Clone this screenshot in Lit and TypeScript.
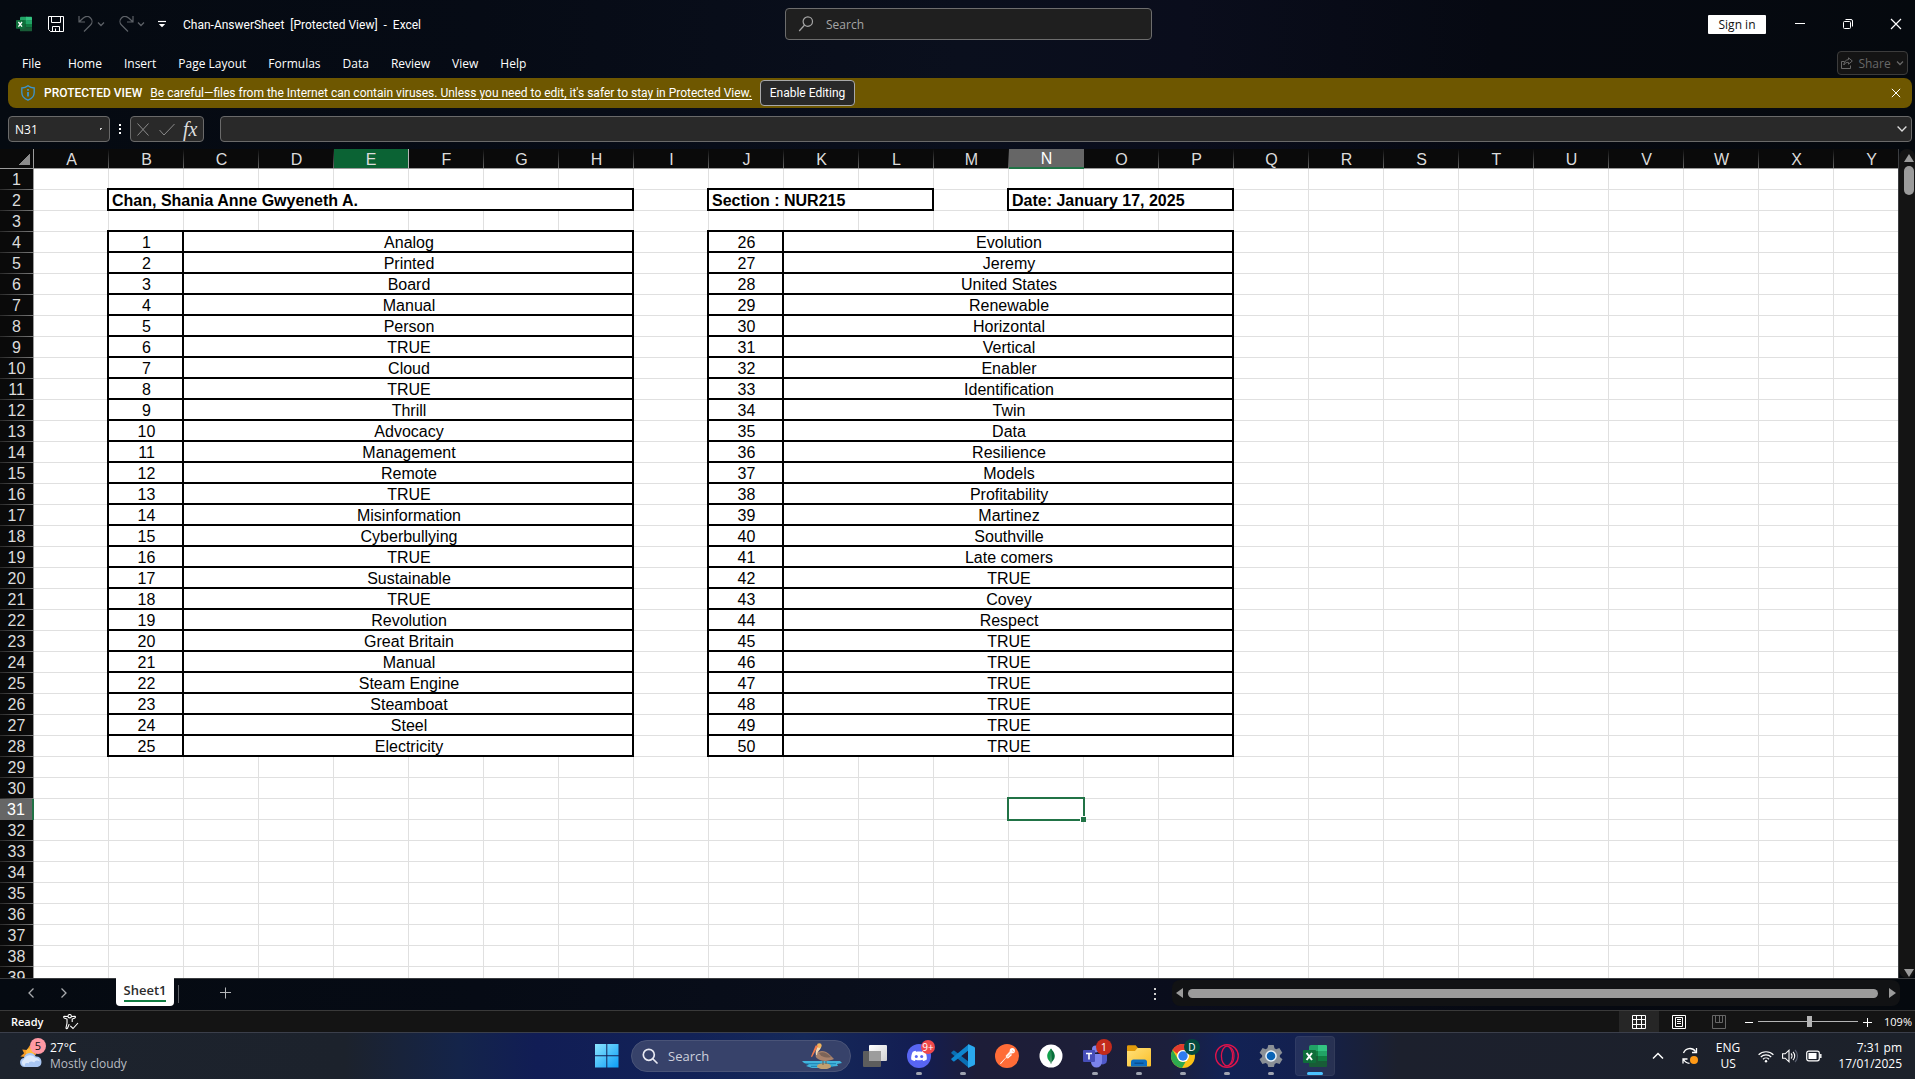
import { LitElement, html, css, nothing } from "lit";
import { customElement, state } from "lit/decorators.js";
import { classMap } from "lit/directives/class-map.js";

const ICONS = {
  excel: html`<svg viewBox="0 0 24 24" aria-hidden="true">
    <path fill="#21a366" d="M8 1h8v6H6V3a2 2 0 0 1 2-2z" />
    <path fill="#33c481" d="M15 1h8a1 1 0 0 1 1 1v5h-9z" />
    <path fill="#107c41" d="M6 7h9v5H6z" />
    <path fill="#21a366" d="M15 7h9v5h-9z" />
    <path fill="#185c37" d="M6 12h9v5h9v5a1 1 0 0 1-1 1H7a1 1 0 0 1-1-1z" />
    <path fill="#107c41" d="M15 12h9v5h-9z" />
    <rect x="0" y="6" width="13" height="13" rx="1" fill="#0f6e3a" />
    <path d="M3.600 9l5.400 7M9 9l-5.400 7" stroke="#fff" stroke-width="2" fill="none" />
  </svg>`,
  save: html`<svg viewBox="0 0 16 16" fill="none" stroke="#fff" stroke-width="1" aria-hidden="true">
    <path d="M.5.5h15v15h-13l-2-2zM3.500.5v6h9v-6M4.500 15.500v-5h7v5M7.500 12.500v3" />
  </svg>`,
  undo: html`<svg viewBox="0 0 16 16" fill="none" stroke="#5d6167" stroke-width="1.200" aria-hidden="true">
    <path d="M1 0v6h6M1.200 5.800L5 2.200C7.500 0 10.500 0 12.500 2c2 2 2 5 0 7L6 15.500" />
  </svg>`,
  redo: html`<svg viewBox="0 0 16 16" fill="none" stroke="#5d6167" stroke-width="1.200" aria-hidden="true">
    <path d="M15 0v6H9M14.800 5.800L11 2.200C8.500 0 5.500 0 3.500 2c-2 2-2 5 0 7l6.500 6.500" />
  </svg>`,
  chev: html`<svg viewBox="0 0 8 8" fill="none" stroke="currentColor" stroke-width="1.300" aria-hidden="true">
    <path d="M1 2.500l3 3 3-3" />
  </svg>`,
  customise: html`<svg viewBox="0 0 8 8" aria-hidden="true">
    <path d="M0 1.500h8" stroke="#fff" stroke-width="1.200" /><path d="M.8 4h6.400L4 7.200z" fill="#fff" />
  </svg>`,
  lens: html`<svg viewBox="0 0 16 16" fill="none" stroke="#a5a5a5" stroke-width="1.200" aria-hidden="true">
    <circle cx="9.800" cy="5.600" r="4.700" /><path d="M6.600 9L1.200 15" />
  </svg>`,
  minus: html`<svg viewBox="0 0 12 12" aria-hidden="true"><path d="M1 5.500h10" stroke="#fff" stroke-width="1" /></svg>`,
  restore: html`<svg viewBox="0 0 12 12" fill="none" stroke="#fff" stroke-width="1" aria-hidden="true">
    <rect x="1.500" y="3.500" width="7" height="7" rx="1" /><path d="M3.500 1.500H9a1.500 1.500 0 0 1 1.500 1.500v5.500" />
  </svg>`,
  close: html`<svg viewBox="0 0 12 12" aria-hidden="true"><path d="M1 1l10 10M11 1L1 11" stroke="#fff" stroke-width="1.200" /></svg>`,
  share: html`<svg viewBox="0 0 12 12" fill="none" stroke="#686868" stroke-width="1" aria-hidden="true">
    <path d="M3.500 4.500h-3v7h9v-3M7.500.8L11.300 4 7.500 7.200V5.400C5.500 5.200 4 6 2.800 8 3 5 4.800 2.700 7.500 2.600z" />
  </svg>`,
  shield: html`<svg viewBox="0 0 14 16" aria-hidden="true">
    <path d="M7 .8C5.300 2.200 3 3 .8 3v4.500c0 4 2.500 6.300 6.200 7.700 3.700-1.400 6.200-3.700 6.200-7.700V3C11 3 8.700 2.200 7 .8z" fill="none" stroke="#3c95d0" stroke-width="1.300" />
    <path d="M7 4v1.800M7 7v4.500" stroke="#3c95d0" stroke-width="1.800" />
  </svg>`,
  cancel: html`<svg viewBox="0 0 16 16" fill="none" stroke="#8b8b8b" stroke-width="1" aria-hidden="true"><path d="M2.500 2.500l11 12M13.500 2.500l-11 12" /></svg>`,
  tick: html`<svg viewBox="0 0 16 16" fill="none" stroke="#8b8b8b" stroke-width="1" aria-hidden="true"><path d="M.5 9l4.500 5L15.500 3" /></svg>`,
  downWide: html`<svg viewBox="0 0 10 8" fill="none" stroke="#ddd" stroke-width="1.300" aria-hidden="true"><path d="M.6 1.500L5 6l4.400-4.500" /></svg>`,
  left: html`<svg viewBox="0 0 8 12" fill="none" stroke="#a9abae" stroke-width="1.300" aria-hidden="true"><path d="M6.500 1.500L2 6l4.500 4.500" /></svg>`,
  right: html`<svg viewBox="0 0 8 12" fill="none" stroke="#a9abae" stroke-width="1.300" aria-hidden="true"><path d="M1.500 1.500L6 6l-4.500 4.500" /></svg>`,
  plus: html`<svg viewBox="0 0 12 12" aria-hidden="true"><path d="M5.500 .5v11M0 5.500h11" stroke="#b5b7ba" stroke-width="1" /></svg>`,
  access: html`<svg viewBox="0 0 16 16" fill="none" stroke="#fff" stroke-width="1.100" aria-hidden="true">
    <path d="M5 2.500L1.200 2.200C.4 2.500.5 3.600 1.200 3.900L4 5v4l-1 5c.3.800 1.200.8 1.500.2L6 10.500h.5M8.500 2.500l3.400-.3c.8.300.8 1.400 0 1.700L9.200 5v3" />
    <circle cx="6.700" cy="2.200" r="1.700" /><path d="M7.300 11.800l2.700 2.700 5-5.500" />
  </svg>`,
  viewGrid: html`<svg viewBox="0 0 14 14" fill="none" stroke="#fff" stroke-width="1" aria-hidden="true"><path d="M.5.5h13v13H.5zM4.500 .5v13M9.500 .5v13M.5 4.500h13M.5 9.500h13" /></svg>`,
  viewPage: html`<svg viewBox="0 0 14 14" fill="none" stroke="#fff" stroke-width="1" aria-hidden="true"><path d="M.5.5h13v13H.5zM3.500 2.500h7v9h-7zM5 4.500h4M5 6.500h4M5 8.500h4" /></svg>`,
  viewBreak: html`<svg viewBox="0 0 14 14" fill="none" stroke="#666" stroke-width="1" aria-hidden="true"><path d="M.5.5h13v13H.5zM3.500.5v7h7v-7M7.500 .5v7" /></svg>`,
  zoomOut: html`<svg viewBox="0 0 10 10" aria-hidden="true"><path d="M1 5.500h8" stroke="#fff" stroke-width="1" /></svg>`,
  zoomIn: html`<svg viewBox="0 0 10 10" aria-hidden="true"><path d="M1 5.500h9M5.500 1v9" stroke="#fff" stroke-width="1" /></svg>`,
  weather: html`<svg viewBox="0 0 26 26" aria-hidden="true">
    <path d="M12 1l2.500 5 5-1-1 6-6 6-5-3-6-.500 4-3.500-2-4 5 .500z" fill="#f59a23" />
    <circle cx="12" cy="9" r="4.500" fill="#ffb83d" />
    <path d="M6 25a5 5 0 0 1-.8-9.900 7 7 0 0 1 13-1.500A5.800 5.800 0 0 1 20 25z" fill="#a9c6f2" />
    <path d="M6 24a4 4 0 0 1-.5-7.500 7 7 0 0 1 12-1.500c3 0 5 2 5 4-3-2-5-1-6 1-3-2-6-1-6 1-2-1-3-.5-4 .5z" fill="#dce9fc" />
  </svg>`,
  start: html`<svg viewBox="0 0 24 24" aria-hidden="true">
    <defs><linearGradient id="win" x1="0" y1="0" x2="1" y2="1"><stop offset="0" stop-color="#8be4fd" /><stop offset="1" stop-color="#0a9df7" /></linearGradient></defs>
    <path fill="url(#win)" d="M0 0h11.300v11.300H0zM12.300 0H23.500v11.300H12.300zM0 12.300h11.300v11.300H0zM12.300 12.300h11.200v11.300H12.300z" />
  </svg>`,
  taskLens: html`<svg viewBox="0 0 16 16" fill="none" stroke="#e8e9f2" stroke-width="1.700" aria-hidden="true"><circle cx="6.800" cy="6.800" r="5.500" /><path d="M11 11l4 4" stroke-linecap="round" /></svg>`,
  pelican: html`<svg viewBox="0 0 40 26" aria-hidden="true">
    <path d="M0 18h38l2 2-5 1 1 2-6 .5-3 1.500H10l-6-2 3-1.500-5-1.500z" fill="#42b4dc" />
    <path d="M4 20h30v1.200H4zM9 22.800h22V24H9z" fill="#2389b8" />
    <ellipse cx="22" cy="23.200" rx="7" ry="3" fill="#c2a170" />
    <path d="M21 15v7M24 15v6" stroke="#6b5f55" stroke-width="1" />
    <path d="M14 11c4-5 10-3 14 1l4 4c-4 2-12 3-16 0-2-1-3-3-2-5z" fill="#a8826c" />
    <path d="M17 10c4-2 8 0 12 4-4 1-9 1-12-4z" fill="#7c6458" />
    <path d="M15 12c0-4 4-5 4-8.500A2.200 2.200 0 0 0 15 3c0 3-2 5-1 9z" fill="#f3d9b4" />
    <circle cx="17.300" cy="2.700" r="2.400" fill="#f0b45c" />
    <path d="M16.500 2.500L10 14c-.8.500-1-.5-.6-1.500l4.200-10z" fill="#f07a4c" />
  </svg>`,
  taskview: html`<svg viewBox="0 0 24 24" aria-hidden="true">
    <defs><linearGradient id="tvw" x1="0" y1="0" x2="1" y2="1"><stop offset="0" stop-color="#fff" /><stop offset="1" stop-color="#d2d2d2" /></linearGradient></defs>
    <rect x="6" y="1" width="18" height="16" rx="1" fill="url(#tvw)" />
    <rect x="0" y="7" width="18" height="16" rx="1" fill="#5d5d5d" />
    <path d="M6 7h12v10H6z" fill="#9d9d9d" />
  </svg>`,
  discord: html`<svg viewBox="0 0 24 24" aria-hidden="true">
    <circle cx="12" cy="12" r="12" fill="#5865f2" />
    <path fill="#fff" d="M8.500 6.800c-1 .2-2 .5-2.700.9C4.500 10 4 12.500 4.200 15.500c1.200.9 2.300 1.300 3.600 1.600l.8-1.400c2.200.8 4.600.8 6.800 0l.8 1.400c1.300-.3 2.400-.7 3.600-1.600.2-3-.3-5.500-1.600-7.800-.8-.4-1.700-.7-2.700-.9l-.6 1c-2-.3-3.800-.3-5.800 0z" />
    <circle cx="9.300" cy="12.400" r="1.500" fill="#5865f2" /><circle cx="14.700" cy="12.400" r="1.500" fill="#5865f2" />
  </svg>`,
  vscode: html`<svg viewBox="0 0 24 24" aria-hidden="true">
    <path fill="#0a6fb3" d="M.5 8.200l1.700-1.500a1 1 0 0 1 1.300 0L18 18v6L.5 9.500a1 1 0 0 1 0-1.300z" />
    <path fill="#0e86cf" d="M.5 15.800l1.700 1.500a1 1 0 0 0 1.300 0L18 6V0L.5 14.500a1 1 0 0 0 0 1.300z" />
    <path fill="#2aa9ee" d="M17.500 23.800c-.6-.5-.5-1-.5-1.500V1.700c0-.5 0-1 .6-1.500L23 2.700c.6.300 1 .8 1 1.500v15.600c0 .7-.4 1.200-1 1.500z" />
  </svg>`,
  postman: html`<svg viewBox="0 0 24 24" aria-hidden="true">
    <circle cx="12" cy="12" r="12" fill="#ff6c37" />
    <path d="M5 19.500l6.500-6.700 3.500-3.600 2 1.800-4 3.500-2-.5-5.200 6z" fill="#fff" />
    <path d="M10.500 12l4.500-5 2.300 2.500-5 4.500z" fill="#fff" opacity=".9" />
    <circle cx="17.300" cy="6.700" r="2.600" fill="#fff" />
    <path d="M12 13.500l4.500-4.500" stroke="#ff6c37" stroke-width=".7" /><path d="M17.300 6.700l1.300 1" stroke="#ff6c37" stroke-width=".8" />
  </svg>`,
  mongo: html`<svg viewBox="0 0 24 24" aria-hidden="true">
    <circle cx="12" cy="12" r="11.500" fill="#fff" />
    <path d="M12 4.300c-.6 1.700-3.800 4-3.800 7.800 0 3.200 2 5 3.300 6.100z" fill="#10a04b" />
    <path d="M12 4.300c.6 1.700 3.800 4 3.800 7.800 0 3.200-2 5-3.300 6.100z" fill="#07703a" />
    <path d="M12 5v14.500" stroke="#0b6b39" stroke-width="1" />
  </svg>`,
  teams: html`<svg viewBox="0 0 24 24" aria-hidden="true">
    <circle cx="19.500" cy="8" r="2.500" fill="#5059c9" /><path d="M17 10.500h7v6a4 4 0 0 1-7 2.500z" fill="#5059c9" />
    <circle cx="12.500" cy="5" r="3.500" fill="#7b83eb" /><path d="M8 10h11v8a5.500 5.500 0 0 1-11 0z" fill="#7b83eb" />
    <rect y="6" width="12" height="12" rx="1" fill="#464eb8" />
    <path d="M3 9.500h6M6 9.500v6" stroke="#fff" stroke-width="1.600" />
  </svg>`,
  folder: html`<svg viewBox="0 0 24 24" aria-hidden="true">
    <defs><linearGradient id="fld" x1="0" y1="0" x2="1" y2="1"><stop offset="0" stop-color="#ffe07a" /><stop offset="1" stop-color="#fbc02a" /></linearGradient></defs>
    <path d="M0 2.500A1.200 1.200 0 0 1 1.200 1.300h7.500L11 4v4H0z" fill="#e19a0a" />
    <path d="M0 7h8l2.500-3H23a1 1 0 0 1 1 1v16.500a1 1 0 0 1-1 1H1a1 1 0 0 1-1-1z" fill="url(#fld)" />
    <path d="M4 22.500V18a2.500 2.500 0 0 1 2.500-2.500h11A2.500 2.500 0 0 1 20 18v4.500z" fill="#0f6fc0" />
    <path d="M7.500 18.500h9v1.500h-9z" fill="#0a4f92" />
  </svg>`,
  chrome: html`<svg viewBox="0 0 24 24" aria-hidden="true">
    <circle cx="12" cy="12" r="12" fill="#fbc116" />
    <path d="M12 0a12 12 0 0 1 10.400 6H12a6 6 0 0 0-5.500 4L1.600 6A12 12 0 0 1 12 0z" fill="#e33b2e" />
    <path d="M1.600 6l5.200 9A6 6 0 0 0 12 18h2.500L11 24A12 12 0 0 1 1.600 6z" fill="#2da94f" />
    <circle cx="12" cy="12" r="6" fill="#fff" /><circle cx="12" cy="12" r="4.700" fill="#2f7cf0" />
  </svg>`,
  opera: html`<svg viewBox="0 0 24 24" fill="none" stroke="#e0134b" aria-hidden="true">
    <circle cx="12" cy="12" r="11.300" stroke-width="1.400" /><ellipse cx="12" cy="12" rx="5.600" ry="9.800" stroke-width="1.300" />
    <path d="M14.500 2.800c6 3 6 15.400 0 18.400" stroke-width="1.200" />
  </svg>`,
  settings: html`<svg viewBox="0 0 24 24" aria-hidden="true">
    <path fill="#8b9096" d="M9.300 1h5.400l.8 3.200 1.700 1L20.300 4l3 4.800-2.500 2.400v1.800l2.700 2.200-2.900 4.800-3.200-1.100-1.700 1-.8 3.100H9.300l-.9-3.100-1.700-1L3.400 20 .5 15.200 3.100 13v-1.800L.6 8.800l3-4.800 3.100 1.200 1.700-1z" />
    <circle cx="12" cy="12" r="5.800" fill="#e9f3fb" /><circle cx="12" cy="12" r="4.300" fill="#0a63b5" />
  </svg>`,
  up: html`<svg viewBox="0 0 12 12" fill="none" stroke="#fff" stroke-width="1.500" aria-hidden="true"><path d="M1 8.500l5-5 5 5" /></svg>`,
  sync: html`<svg viewBox="0 0 16 18" fill="none" stroke="#fff" stroke-width="1.300" aria-hidden="true">
    <path d="M1.500 6a6.800 6.800 0 0 1 12-1.500M14.500 1v4.500H10M1 16.500V12h4.500M1.500 12.500c1.500 2.500 3.500 3.700 6 3.800" />
    <circle cx="12" cy="13" r="4" fill="#ff9a17" stroke="none" />
  </svg>`,
  wifi: html`<svg viewBox="0 0 16 14" fill="none" stroke="#fff" stroke-width="1.200" aria-hidden="true">
    <path d="M.6 5.800a10.500 10.500 0 0 1 14.800 0M2.800 8a7.400 7.400 0 0 1 10.400 0M5 10.200a4.300 4.300 0 0 1 6 0" /><circle cx="8" cy="12.200" r="1.200" fill="#fff" stroke="none" />
  </svg>`,
  volume: html`<svg viewBox="0 0 16 14" fill="none" stroke="#fff" stroke-width="1.100" aria-hidden="true">
    <path d="M.6 4.800h2.600L7 1.200v11.600L3.200 9.200H.6zM9 4.500a3.500 3.500 0 0 1 0 5M11 2.800a6 6 0 0 1 0 8.400" /><path d="M13 1a8.500 8.500 0 0 1 0 12" stroke="#5a6070" />
  </svg>`,
  battery: html`<svg viewBox="0 0 16 12" aria-hidden="true">
    <rect x=".7" y="1.200" width="12.600" height="9.600" rx="2" fill="none" stroke="#fff" stroke-width="1.200" /><rect x="2.500" y="3" width="8" height="6" fill="#fff" /><path d="M14.800 4v4" stroke="#fff" stroke-width="1.400" />
  </svg>`,
};

const COLUMNS = "ABCDEFGHIJKLMNOPQRSTUVWXY".split("");
const ROW_COUNT = 39;

const LEFT_ANSWERS = [
  "Analog", "Printed", "Board", "Manual", "Person", "TRUE", "Cloud", "TRUE", "Thrill", "Advocacy",
  "Management", "Remote", "TRUE", "Misinformation", "Cyberbullying", "TRUE", "Sustainable", "TRUE",
  "Revolution", "Great Britain", "Manual", "Steam Engine", "Steamboat", "Steel", "Electricity",
];
const RIGHT_ANSWERS = [
  "Evolution", "Jeremy", "United States", "Renewable", "Horizontal", "Vertical", "Enabler",
  "Identification", "Twin", "Data", "Resilience", "Models", "Profitability", "Martinez", "Southville",
  "Late comers", "TRUE", "Covey", "Respect", "TRUE", "TRUE", "TRUE", "TRUE", "TRUE", "TRUE",
];

interface Block {
  row: number;
  col: number;
  span: number;
  text: string;
  bold?: boolean;
}

/* Bordered blocks of the sheet; col counts from 0 (A). */
const BLOCKS: Block[] = [
  { row: 2, col: 1, span: 7, text: "Chan, Shania Anne Gwyeneth A.", bold: true },
  { row: 2, col: 9, span: 3, text: "Section : NUR215", bold: true },
  { row: 2, col: 13, span: 3, text: "Date: January 17, 2025", bold: true },
  ...LEFT_ANSWERS.flatMap((text, i) => [
    { row: i + 4, col: 1, span: 1, text: String(i + 1) },
    { row: i + 4, col: 2, span: 6, text },
  ]),
  ...RIGHT_ANSWERS.flatMap((text, i) => [
    { row: i + 4, col: 9, span: 1, text: String(i + 26) },
    { row: i + 4, col: 10, span: 6, text },
  ]),
];

const blockAt = (row: number, col: number) =>
  BLOCKS.find((b) => b.row === row && col >= b.col && col < b.col + b.span);

const SHARED = css`
  :host {
    display: block;
    font-family: "Open Sans", "Noto Sans", sans-serif;
    font-size: 12px;
    color: #fff;
  }
  * { box-sizing: border-box; }
  button, input {
    font: inherit;
    color: inherit;
    margin: 0;
    padding: 0;
    border: 0;
    background: none;
  }
  button {
    display: flex;
    align-items: center;
    justify-content: center;
    flex: none;
  }
  svg { display: block; flex: none; }
  .s8 svg { width: 8px; height: 8px; }
  .s10 svg { width: 10px; height: 10px; }
  .s12 svg { width: 12px; height: 12px; }
  .s14 svg { width: 14px; height: 14px; }
  .s16 svg { width: 16px; height: 16px; }
  .s24 svg { width: 24px; height: 24px; }
`;

@customElement("title-bar")
class TitleBar extends LitElement {
  static styles = [SHARED, css`
    .bar {
      display: grid;
      grid-template-columns: minmax(0, 1fr) 367px minmax(0, 1fr);
      height: 46px;
      padding: 2px 0 0 22px;
      align-items: center;
    }
    .quick { display: flex; align-items: center; margin-left: -6px; }
    .app { width: 32px; }
    .save { width: 16px; margin-right: 14px; }
    .split { width: 14px; color: #5d6167; margin-right: 10px; }
    .title { margin-left: 17px; padding-top: 1px; white-space: pre; font-family: Roboto, sans-serif; }
    .search {
      display: flex;
      align-items: center;
      gap: 12px;
      height: 32px;
      padding: 0 12px;
      border: 1px solid #6d6d6d;
      border-radius: 4px;
      background: #1f1f1f;
    }
    .search input { flex: 1; min-width: 0; }
    .search input::placeholder { color: #a5a5a5; opacity: 1; }
    .window { display: flex; justify-content: flex-end; align-items: center; gap: 10px; }
    .signin {
      width: 58px;
      height: 19px;
      background: #fff;
      color: #111;
      border-radius: 1px;
      margin-right: 5px;
    }
    .ctl { width: 38px; height: 32px; }
  `];

  render() {
    return html`
      <header class="bar">
        <div class="quick">
          <span class="app s16">${ICONS.excel}</span>
          <button class="save s16" aria-label="Save">${ICONS.save}</button>
          <button class="s16" aria-label="Undo">${ICONS.undo}</button>
          <button class="split s8" aria-label="Undo history">${ICONS.chev}</button>
          <button class="s16" aria-label="Redo">${ICONS.redo}</button>
          <button class="split s8" aria-label="Redo history">${ICONS.chev}</button>
          <button class="s8" aria-label="Customise Quick Access Toolbar">${ICONS.customise}</button>
          <span class="title">Chan-AnswerSheet  [Protected View]  -  Excel</span>
        </div>
        <label class="search s16">${ICONS.lens}<input type="search" placeholder="Search" aria-label="Search" /></label>
        <div class="window s12">
          <button class="signin">Sign in</button>
          <button class="ctl" aria-label="Minimise">${ICONS.minus}</button>
          <button class="ctl" aria-label="Restore">${ICONS.restore}</button>
          <button class="ctl" aria-label="Close">${ICONS.close}</button>
        </div>
      </header>`;
  }
}

@customElement("ribbon-tabs")
class RibbonTabs extends LitElement {
  static styles = [SHARED, css`
    .tabs { display: flex; align-items: center; height: 32px; padding: 2px 7px 0 11px; }
    .tab { padding: 0 11px; height: 24px; }
    .tab:first-child { margin-right: 5px; }
    .share {
      display: flex;
      gap: 5px;
      width: 71px;
      height: 24px;
      margin-left: auto;
      border: 1px solid #3c3c3c;
      border-radius: 4px;
      background: #141414;
      color: #686868;
    }
  `];

  render() {
    const tabs = ["File", "Home", "Insert", "Page Layout", "Formulas", "Data", "Review", "View", "Help"];
    return html`
      <nav class="tabs">
        ${tabs.map((t) => html`<button class="tab">${t}</button>`)}
        <button class="share" disabled>
          <span class="s12">${ICONS.share}</span>Share<span class="s8">${ICONS.chev}</span>
        </button>
      </nav>`;
  }
}

@customElement("message-bar")
class MessageBar extends LitElement {
  static styles = [SHARED, css`
    .bar {
      display: flex;
      align-items: center;
      height: 30px;
      margin: 0 3px 0 8px;
      padding: 0 11px 0 12px;
      border-radius: 8px;
      background: #6e5700;
      font-family: Roboto, sans-serif;
    }
    .shield svg { width: 16px; height: 16px; }
    .name { margin-left: 8px; font-weight: 500; }
    .link { margin-left: 8px; color: #fff; text-decoration: underline; text-underline-offset: 2px; }
    .enable {
      height: 26px;
      width: 95px;
      margin-left: 8px;
      border: 1px solid #a8a8a8;
      border-radius: 4px;
      background: #292929;
    }
    .dismiss { margin-left: auto; }
  `];

  render() {
    return html`
      <section class="bar" aria-label="Protected View">
        <span class="shield">${ICONS.shield}</span>
        <span class="name">PROTECTED VIEW</span>
        <a class="link" href="#protected-view">Be careful—files from the Internet can contain viruses. Unless you need to edit, it's safer to stay in Protected View.</a>
        <button class="enable">Enable Editing</button>
        <button class="dismiss s10" aria-label="Dismiss">${ICONS.close}</button>
      </section>`;
  }
}

@customElement("formula-bar")
class FormulaBar extends LitElement {
  static styles = [SHARED, css`
    .bar { display: flex; align-items: center; height: 41px; padding: 1px 3px 0 8px; }
    .box {
      display: flex;
      align-items: center;
      height: 26px;
      border: 1px solid #6a6a6a;
      border-radius: 4px;
      background: #292929;
    }
    .name { width: 102px; padding: 0 6px; }
    .name input { flex: 1; min-width: 0; }
    .mark { width: 3px; height: 3px; background: linear-gradient(135deg, #ccc 50%, transparent 50%); }
    .dots { width: 20px; display: grid; gap: 2px; justify-content: center; }
    .dots i { width: 2px; height: 2px; background: #fff; }
    .tools { width: 74px; padding: 0 4px; gap: 8px; margin-right: 16px; }
    .fx { font: italic 20px/20px "Liberation Serif", serif; color: #ddd; }
    .formula { flex: 1; min-width: 0; padding: 0 4px 0 8px; }
    .formula input { flex: 1; min-width: 0; }
    .formula svg { width: 10px; height: 8px; }
  `];

  render() {
    return html`
      <div class="bar">
        <div class="box name">
          <input type="text" value="N31" aria-label="Name box" />
          <button aria-label="Named ranges"><span class="mark"></span></button>
        </div>
        <span class="dots"><i></i><i></i><i></i></span>
        <div class="box tools s16">
          <button aria-label="Cancel">${ICONS.cancel}</button>
          <button aria-label="Enter">${ICONS.tick}</button>
          <button class="fx" aria-label="Insert function">fx</button>
        </div>
        <div class="box formula">
          <input type="text" aria-label="Formula bar" />
          <button aria-label="Expand formula bar">${ICONS.downWide}</button>
        </div>
      </div>`;
  }
}

@customElement("sheet-grid")
class SheetGrid extends LitElement {
  @state() private selected = { row: 31, col: 13 };

  static styles = [SHARED, css`
    :host { flex: 1; min-height: 0; }
    .area { display: flex; height: 100%; border-bottom: 1px solid #3b3d40; }
    .view { flex: 1; min-width: 0; overflow: hidden; background: #fff; border-right: 1px solid #3b3d40; }
    table {
      width: 1909px;
      table-layout: fixed;
      border-collapse: separate;
      border-spacing: 0;
      font: 16px/17px "Liberation Sans", Arial, sans-serif;
      color: #000;
    }
    .heads { width: 34px; }
    th, td { padding: 2px 0 0; overflow: hidden; white-space: nowrap; height: 21px; vertical-align: top; }
    th {
      font-weight: 400;
      color: #dcdcdc;
      background: #0a0a0a;
      border: 0 solid #9b9b9b;
    }
    thead th {
      height: 20px;
      border-bottom-width: 1px;
      background: linear-gradient(#0a0a0a, #686868) right / 1px 100% no-repeat #0a0a0a;
    }
    thead .corner { background: linear-gradient(135deg, transparent 50%, #8c8c8c 50%) 18px 4px / 12px 12px no-repeat #0a0a0a; border-right: 1px solid #9b9b9b; }
    thead .hover { background: #0b6334; border-right: 1px solid #b5b5b5; }
    thead .picked { background: #666; border-bottom: 2px solid #217346; color: #fff; line-height: 16px; }
    tbody th {
      line-height: 18px;
      border-right-width: 1px;
      background: linear-gradient(90deg, #2a2a2a, #777) bottom / 100% 1px no-repeat #0a0a0a;
    }
    tbody .picked { background: #666; border-right: 2px solid #217346; color: #fff; }
    td {
      --right: #e0e0e0;
      --bottom: #e0e0e0;
      --corner: transparent;
      --right-size: 1px;
      --bottom-size: 1px;
      background:
        linear-gradient(var(--corner), var(--corner)) right bottom / 2px 2px no-repeat,
        linear-gradient(var(--bottom), var(--bottom)) bottom / 100% var(--bottom-size) no-repeat,
        linear-gradient(var(--right), var(--right)) right / var(--right-size) 100% no-repeat;
      text-align: center;
    }
    td.br { --right: #000; --right-size: 2px; }
    td.bb { --bottom: #000; --bottom-size: 2px; }
    td.bc { --corner: #000; }
    td.bold { font-weight: 700; text-align: left; padding-left: 3px; }
    td.active { position: relative; z-index: 1; overflow: visible; }
    .cursor {
      position: absolute;
      inset: -2px -1px -1px -2px;
      border: 2px solid #217346;
    }
    .handle {
      position: absolute;
      right: -3px;
      bottom: -3px;
      width: 6px;
      height: 6px;
      background: #217346;
      border: solid #fff;
      border-width: 1px 0 0 1px;
    }
    .vscroll {
      width: 16px;
      display: flex;
      flex-direction: column;
      align-items: center;
      padding: 5px 0 1px 4px;
      background: #141414;
      border-radius: 8px;
    }
    .arrow { width: 10px; height: 8px; background: #9b9b9b; clip-path: polygon(50% 0, 100% 100%, 0 100%); }
    .arrow.down { clip-path: polygon(0 0, 100% 0, 50% 100%); }
    .thumb { width: 10px; height: 29px; margin: 4px 0 auto; border-radius: 5px; background: #9b9b9b; }
  `];

  private cells(row: number) {
    const out = [];
    for (let col = 0; col < COLUMNS.length; ) {
      const block = blockAt(row, col);
      const span = block?.span ?? 1;
      const next = col + span;
      const below = blockAt(row + 1, col);
      const active = row === this.selected.row && col === this.selected.col;
      const classes = {
        br: !!block || !!blockAt(row, next),
        bb: !!block || !!below,
        bc: !!(block || below || blockAt(row, next) || blockAt(row + 1, next)),
        bold: !!block?.bold,
        active,
      };
      const here = col;
      out.push(html`<td class=${classMap(classes)} colspan=${span}
        @click=${() => (this.selected = { row, col: here })}>${block?.text ?? nothing}${active
          ? html`<span class="cursor"><span class="handle"></span></span>`
          : nothing}</td>`);
      col = next;
    }
    return out;
  }

  render() {
    const rows = Array.from({ length: ROW_COUNT }, (_, i) => i + 1);
    return html`
      <div class="area">
        <div class="view">
          <table>
            <colgroup><col class="heads" />${COLUMNS.map(() => html`<col />`)}</colgroup>
            <thead>
              <tr>
                <th class="corner" aria-label="Select all"></th>
                ${COLUMNS.map((c, i) => html`<th scope="col" class=${classMap({ hover: c === "E", picked: i === this.selected.col })}>${c}</th>`)}
              </tr>
            </thead>
            <tbody>
              ${rows.map((r) => html`<tr><th scope="row" class=${classMap({ picked: r === this.selected.row })}>${r}</th>${this.cells(r)}</tr>`)}
            </tbody>
          </table>
        </div>
        <div class="vscroll">
          <button class="arrow" aria-label="Scroll up"></button>
          <span class="thumb"></span>
          <button class="arrow down" aria-label="Scroll down"></button>
        </div>
      </div>`;
  }
}

@customElement("sheet-tabs")
class SheetTabs extends LitElement {
  static styles = [SHARED, css`
    .strip { display: flex; align-items: flex-start; height: 31px; padding: 0 15px 0 27px; }
    .nav { width: 8px; height: 28px; margin-right: 25px; }
    .nav svg { width: 8px; height: 12px; }
    .tab {
      height: 28px;
      width: 58px;
      margin: -1px 4px 0 23px;
      padding-bottom: 3px;
      border-radius: 0 0 4px 4px;
      background: #fff;
      color: #2b2b2b;
      font-size: 13px;
      font-weight: 600;
    }
    .tab span { border-bottom: 2px solid #107c41; line-height: 20px; }
    .rule { width: 1px; height: 18px; margin: 6px 41px 0 0; background: #5b5e63; }
    .add { height: 28px; }
    .scroll { display: flex; align-items: center; margin-left: auto; width: 746px; height: 28px; }
    .dots { display: grid; gap: 3px; margin: 2px 16px 0 0; }
    .dots i { width: 2px; height: 2px; background: #d0d0d0; }
    .track {
      flex: 1;
      display: flex;
      align-items: center;
      height: 26px;
      padding: 0 4px;
      border-radius: 8px;
      background: #111214;
    }
    .thumb { flex: 1; height: 9px; margin: 0 11px 0 5px; border-radius: 5px; background: #9b9b9b; }
    .arrow { width: 7px; height: 10px; background: #9b9b9b; clip-path: polygon(100% 0, 100% 100%, 0 50%); }
    .arrow.next { clip-path: polygon(0 0, 100% 50%, 0 100%); }
  `];

  render() {
    return html`
      <div class="strip">
        <button class="nav" aria-label="Previous sheet">${ICONS.left}</button>
        <button class="nav" aria-label="Next sheet">${ICONS.right}</button>
        <button class="tab"><span>Sheet1</span></button>
        <span class="rule"></span>
        <button class="add s12" aria-label="New sheet">${ICONS.plus}</button>
        <div class="scroll">
          <span class="dots"><i></i><i></i><i></i></span>
          <div class="track">
            <button class="arrow" aria-label="Scroll left"></button>
            <span class="thumb"></span>
            <button class="arrow next" aria-label="Scroll right"></button>
          </div>
        </div>
      </div>`;
  }
}

@customElement("status-bar")
class StatusBar extends LitElement {
  static styles = [SHARED, css`
    .bar {
      display: flex;
      align-items: center;
      height: 22px;
      padding: 0 3px 0 11px;
      border-top: 1px solid #3a3a3a;
      background: #141414;
      font-size: 11px;
    }
    .ready { font-weight: 600; margin-right: 20px; }
    .views { display: flex; margin-left: auto; margin-right: 5px; }
    .view { width: 40px; height: 21px; }
    .view.on { background: #262626; }
    input[type="range"] {
      appearance: none;
      width: 100px;
      height: 12px;
      margin: 0 4px;
      background: linear-gradient(#b5b5b5, #b5b5b5) center / 100% 1px no-repeat;
    }
    input[type="range"]::-webkit-slider-thumb {
      appearance: none;
      width: 5px;
      height: 11px;
      background: #b5b5b5;
    }
    .percent { margin-left: 12px; }
  `];

  render() {
    return html`
      <footer class="bar">
        <span class="ready">Ready</span>
        <button class="s16" aria-label="Accessibility checker">${ICONS.access}</button>
        <div class="views s14">
          <button class="view on" aria-label="Normal">${ICONS.viewGrid}</button>
          <button class="view" aria-label="Page layout">${ICONS.viewPage}</button>
          <button class="view" aria-label="Page break preview">${ICONS.viewBreak}</button>
        </div>
        <button class="s10" aria-label="Zoom out">${ICONS.zoomOut}</button>
        <input type="range" min="0" max="100" value="52" aria-label="Zoom" />
        <button class="s10" aria-label="Zoom in">${ICONS.zoomIn}</button>
        <span class="percent">109%</span>
      </footer>`;
  }
}

@customElement("task-bar")
class TaskBar extends LitElement {
  static styles = [SHARED, css`
    .bar {
      display: grid;
      grid-template-columns: minmax(0, 1fr) auto minmax(0, 1fr);
      align-items: center;
      height: 47px;
      padding-left: 7px;
      border-top: 1px solid #3b3f4b;
      background: linear-gradient(90deg, #1d232d 0%, #1c222c 18%, #14244a 24%, #111d55 28%, #122257 36%, #15295a 42%, #131d52 48%, #1d1d38 51%, #1d1e38 56%, #1c1f3c 61%, #122255 64%, #13204f 68%, #1c202d 73%, #1c212a 100%);
    }
    .weather { display: flex; align-items: center; gap: 7px; padding: 0 12px; line-height: 16px; }
    .sky { position: relative; }
    .sky svg { width: 24px; height: 26px; }
    .sub { color: #b9bcc2; }
    .badge {
      position: absolute;
      display: grid;
      place-items: center;
      height: 14px;
      min-width: 14px;
      border-radius: 8px;
      font-size: 10px;
      line-height: 14px;
      right: -4px;
      top: -4px;
    }
    .b-pink { background: #ff99a4; color: #111; height: 16px; min-width: 16px; font-size: 11px; top: -5px; right: -3px; }
    .b-red { background: #f0484b; }
    .b-crimson { background: #c42b1c; height: 16px; min-width: 16px; top: -5px; right: -5px; font-size: 11px; }
    .b-green { background: #03483c; height: 16px; min-width: 16px; top: -5px; right: -5px; }
    .apps { display: flex; align-items: center; gap: 4px; }
    .app { position: relative; width: 40px; height: 40px; border-radius: 4px; }
    .app.open { background: #ffffff14; box-shadow: inset 0 0 0 1px #ffffff0d; }
    .glyph { position: relative; }
    .run { position: absolute; left: 17px; bottom: 1px; width: 6px; height: 3px; border-radius: 2px; background: #9fa3b0; }
    .open .run { left: 12px; width: 16px; background: #4cc2ff; }
    .search {
      display: flex;
      align-items: center;
      gap: 10px;
      width: 220px;
      height: 32px;
      padding: 0 8px 0 10px;
      border-radius: 16px;
      background: #37426a;
      border: 1px solid #4a5478;
      font-size: 13px;
    }
    .search input { flex: 1; min-width: 0; }
    .search input::placeholder { color: #cdd0dc; opacity: 1; }
    .search .bird svg { width: 40px; height: 26px; }
    .tray { display: flex; align-items: center; justify-content: flex-end; padding-right: 13px; line-height: 16px; text-align: center; }
    .more { margin-right: 18px; }
    .sync svg { width: 16px; height: 18px; }
    .lang { margin: 0 18px; }
    .status { gap: 8px; }
    .clock { text-align: right; margin-left: 16px; }
  `];

  render() {
    const apps = [
      { name: "Task View", icon: ICONS.taskview },
      { name: "Discord", icon: ICONS.discord, run: true, badge: "9+", tone: "b-red" },
      { name: "Visual Studio Code", icon: ICONS.vscode, run: true },
      { name: "Postman", icon: ICONS.postman },
      { name: "MongoDB Compass", icon: ICONS.mongo },
      { name: "Teams", icon: ICONS.teams, run: true, badge: "1", tone: "b-crimson" },
      { name: "File Explorer", icon: ICONS.folder, run: true },
      { name: "Chrome", icon: ICONS.chrome, run: true, badge: "D", tone: "b-green" },
      { name: "Opera GX", icon: ICONS.opera, run: true },
      { name: "Settings", icon: ICONS.settings, run: true },
      { name: "Excel", icon: ICONS.excel, run: true, open: true },
    ];
    return html`
      <footer class="bar">
        <div class="weather">
          <span class="sky">${ICONS.weather}<span class="badge b-pink">5</span></span>
          <div><div>27°C</div><div class="sub">Mostly cloudy</div></div>
        </div>
        <div class="apps">
          <button class="app s24" aria-label="Start">${ICONS.start}</button>
          <label class="search"><span class="s16">${ICONS.taskLens}</span><input type="search" placeholder="Search" aria-label="Search Windows" /><span class="bird">${ICONS.pelican}</span></label>
          ${apps.map((a) => html`
            <button class=${classMap({ app: true, open: !!a.open })} aria-label=${a.name}>
              <span class="glyph s24">${a.icon}${a.badge ? html`<span class="badge ${a.tone}">${a.badge}</span>` : nothing}</span>
              ${a.run ? html`<span class="run"></span>` : nothing}
            </button>`)}
        </div>
        <div class="tray">
          <button class="more s12" aria-label="Hidden icons">${ICONS.up}</button>
          <button class="sync" aria-label="Updates">${ICONS.sync}</button>
          <button class="lang"><span>ENG<br />US</span></button>
          <button class="status s16" aria-label="Network, volume, battery">${ICONS.wifi}${ICONS.volume}${ICONS.battery}</button>
          <button class="clock"><span>7:31 pm<br />17/01/2025</span></button>
        </div>
      </footer>`;
  }
}

@customElement("app-root")
class AppRoot extends LitElement {
  static styles = css`
    :host {
      display: flex;
      flex-direction: column;
      height: 100vh;
      overflow: hidden;
      background: linear-gradient(90deg, #050a11 0%, #060b15 25%, #0a0f1d 50%, #0a0d1c 62%, #060912 78%, #05090e 100%);
    }
  `;

  render() {
    return html`
      <title-bar></title-bar>
      <ribbon-tabs></ribbon-tabs>
      <message-bar></message-bar>
      <formula-bar></formula-bar>
      <sheet-grid></sheet-grid>
      <sheet-tabs></sheet-tabs>
      <status-bar></status-bar>
      <task-bar></task-bar>`;
  }
}
